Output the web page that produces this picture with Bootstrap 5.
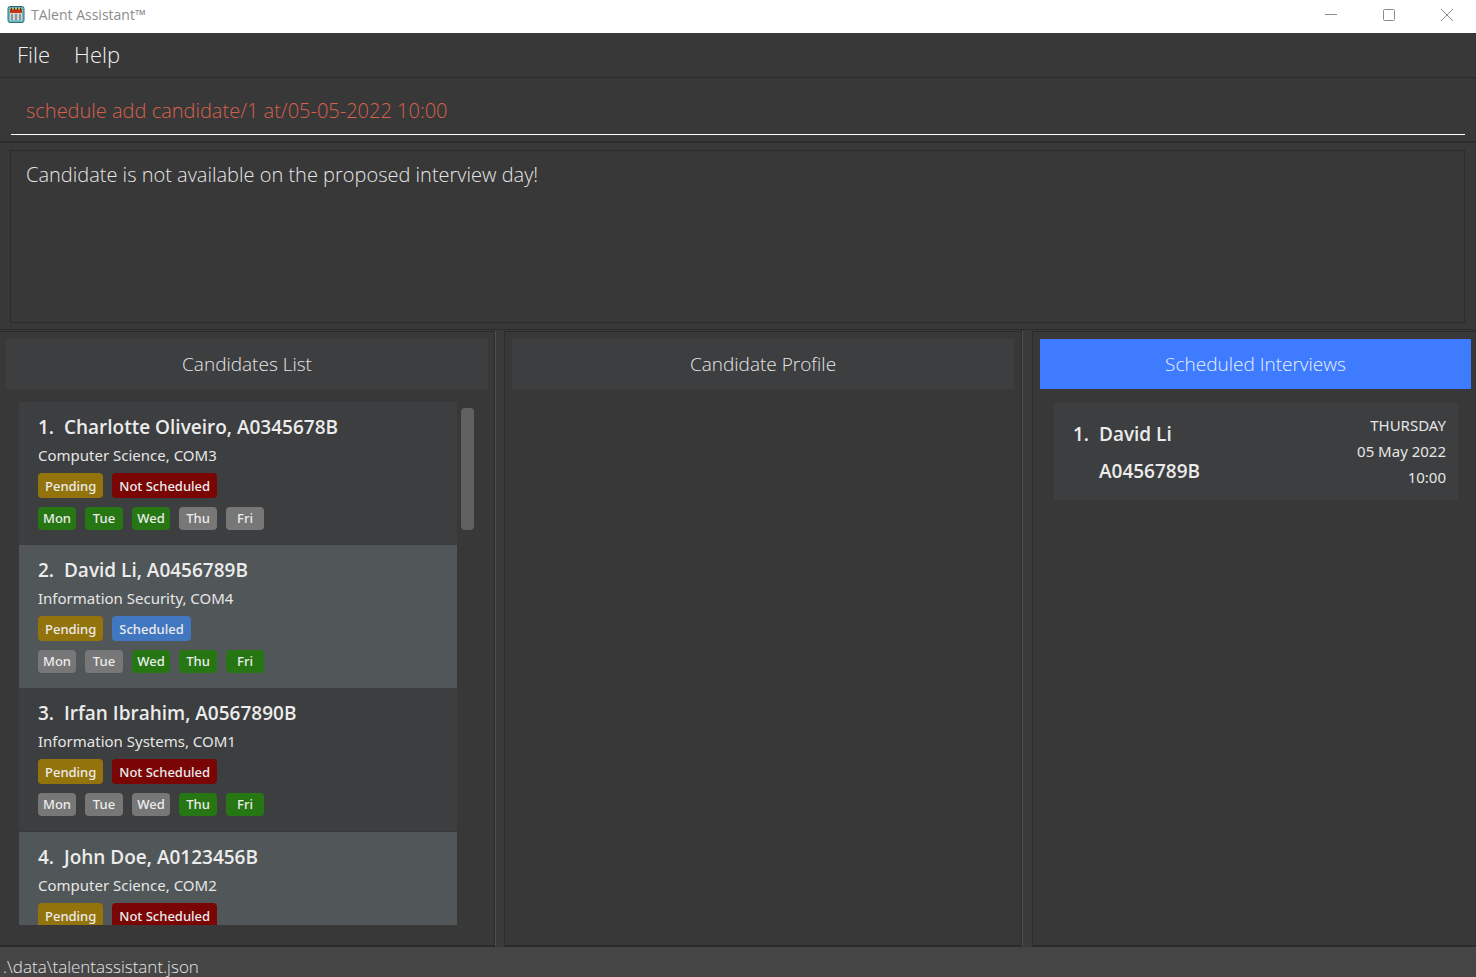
<!DOCTYPE html>
<html lang="en">
<head>
<meta charset="utf-8">
<meta name="viewport" content="width=device-width, initial-scale=1">
<title>TAlent Assistant™</title>
<link href="https://cdn.jsdelivr.net/npm/bootstrap@5.3.0/dist/css/bootstrap.min.css" rel="stylesheet">
<style>
  body { background: #383838; color: #e6e6e6; font-family: "Open Sans", "Noto Sans", sans-serif; font-size: 15px; line-height: 20px; }
  .title-bar { height: 33px; background: #fff; color: #8c8c8c; font-size: 14px; padding: 0 0 4px 7px; gap: 6px; }
  .title-bar .win-btn { width: 58px; height: 28px; line-height: 0; }
  .menu-strip { height: 45px; border-bottom: 1px solid #2b2b2b; padding: 0 5px 2px; }
  .menu-strip a { color: #f0f0f0; font-size: 22px; font-weight: 300; padding: 0 12px; }
  .command-area { padding: 8px 11px 6px; border-bottom: 2px solid #2d2d2d; }
  .command-box { height: 49px; color: #d9604c; font-size: 20px; font-weight: 300; padding: 0 15px; border-bottom: 1px solid #fff; outline: 0; }
  .result-area { padding: 7px 11px 6px 10px; border-bottom: 1px solid #2b2b2b; }
  .result-box { height: 173px; color: #e6e6e6; font-size: 20px; font-weight: 300; line-height: 28px; padding: 10px 15px; border: 1px solid #2b2b2b; resize: none; outline: 0; }
  .panes { display: grid; grid-template-columns: 495fr 9px 518fr 10px 444fr; grid-template-rows: minmax(0, 1fr); margin-top: 1px; }
  .pane { border: 1px solid #2b2b2b; border-width: 1px 1px 2px; padding: 7px 7px 20px; }
  .pane-first { border-left: 0; padding-left: 6px; padding-right: 6px; }
  .pane-last { border-right: 0; padding-right: 5px; }
  .splitter { border-left: 1px solid #505050; margin-bottom: 1px; background: #3a3a3a; }
  .pane-title { height: 50px; background: #3d3e40; color: #e6e6e6; font-size: 19px; font-weight: 300; }
  .pane-title.is-active { background: #3e7bff; color: #e8efff; }
  .list-view { margin: 13px 14px 0 13px; gap: 4px; }
  .scroll-thumb { width: 13px; height: 122px; margin-top: 6px; border-radius: 4px; background: #606060; }
  .person { height: 143px; background: #3c3e3f; padding: 12px 19px 0; font-family: "Noto Sans", sans-serif; }
  .person:nth-child(even) { background: #515658; }
  .person:nth-child(3n) { height: 144px; border-bottom: 1px solid #363839; }
  .person-name { font-family: "Open Sans", sans-serif; font-size: 19px; line-height: 26px; font-weight: 600; color: #ececec; }
  .person-course { margin-top: 5px; margin-bottom: 8px; }
  .tags { gap: 9px; }
  .tags + .tags { margin-top: 9px; }
  .tag { height: 25px; padding: 0 7px; border-radius: 4px; font-size: 13px; line-height: 26px; font-weight: 500; color: #ececec; }
  .tag-day { width: 38px; height: 23px; padding: 0; line-height: 22px; text-align: center; background: #777; }
  .is-free { background: #267714; }
  .is-pending { background: #93730b; }
  .is-unscheduled { background: #7a0505; }
  .is-scheduled { background: #4176c0; }
  .interview { margin: 14px 13px 0 14px; padding: 9px 12px 10px 19px; background: #3c3e3f; }
  .interview .person-name { line-height: 37px; padding-top: 4px; margin-bottom: -4px; }
  .interview-time { line-height: 26px; font-family: "Noto Sans", sans-serif; }
  .status-strip { height: 30px; background: #454545; font-size: 17px; font-weight: 300; line-height: 24px; padding: 8px 3px 0; }
</style>
</head>
<body class="vh-100 d-flex flex-column overflow-hidden">
<header class="title-bar d-flex align-items-center flex-shrink-0">
  <svg width="18" height="19" viewBox="0 0 18 19" aria-hidden="true">
    <rect x="1" y="1.500" width="16" height="16" rx="2" fill="#6fc0c5" stroke="#356a70"/>
    <path d="M3 8h12v7H3z" fill="#d2d8d8"/>
    <path d="M3 4h12v4H3z" fill="#c8371b"/>
    <path d="M4.500 2.500v3M7.500 2.500v3M10.500 2.500v3M13.500 2.500v3" stroke="#4b3420"/>
    <path d="M6 3v2M9 3v2M12 3v2" stroke="#e9c13a"/>
    <path d="M4 10h2m2 0h2m2 0h2M4 12h2m2 0h2m2 0h2M4 14h2m2 0h2m2 0h2" stroke="#4a4a4a"/>
  </svg>
  <span>TAlent Assistant™</span>
  <div class="d-flex ms-auto">
    <button type="button" class="win-btn btn p-0 border-0 rounded-0" aria-label="Minimize"><svg width="12" height="12" viewBox="0 0 12 12"><path d="M0 5.500h12" stroke="#8c8c8c"/></svg></button>
    <button type="button" class="win-btn btn p-0 border-0 rounded-0" aria-label="Maximize"><svg width="12" height="12" viewBox="0 0 12 12"><rect x=".5" y=".5" width="11" height="11" rx="1" fill="none" stroke="#8c8c8c"/></svg></button>
    <button type="button" class="win-btn btn p-0 border-0 rounded-0" aria-label="Close"><svg width="12" height="12" viewBox="0 0 12 12"><path d="M0 0l12 12M12 0L0 12" stroke="#8c8c8c"/></svg></button>
  </div>
</header>
<nav class="menu-strip d-flex align-items-center flex-shrink-0">
  <a href="#" class="text-decoration-none">File</a>
  <a href="#" class="text-decoration-none">Help</a>
</nav>
<div class="command-area">
  <input type="text" class="command-box d-block w-100 bg-transparent border-top-0 border-start-0 border-end-0" aria-label="Command" value="schedule add candidate/1 at/05-05-2022 10:00">
</div>
<div class="result-area">
  <textarea class="result-box d-block w-100 bg-transparent" aria-label="Result" readonly>Candidate is not available on the proposed interview day!</textarea>
</div>
<main class="panes flex-grow-1 overflow-hidden">
  <section class="pane pane-first d-flex flex-column overflow-hidden">
    <h2 class="pane-title d-flex align-items-center justify-content-center flex-shrink-0 m-0">Candidates List</h2>
    <div class="list-view d-flex flex-grow-1 overflow-hidden">
      <ul class="list-unstyled flex-grow-1 m-0 overflow-hidden">
        <li class="person">
          <div class="person-name">1.&nbsp; Charlotte Oliveiro, A0345678B</div>
          <div class="person-course">Computer Science, COM3</div>
          <div class="tags d-flex"><span class="tag is-pending">Pending</span><span class="tag is-unscheduled">Not Scheduled</span></div>
          <div class="tags d-flex"><span class="tag tag-day is-free">Mon</span><span class="tag tag-day is-free">Tue</span><span class="tag tag-day is-free">Wed</span><span class="tag tag-day">Thu</span><span class="tag tag-day">Fri</span></div>
        </li>
        <li class="person">
          <div class="person-name">2.&nbsp; David Li, A0456789B</div>
          <div class="person-course">Information Security, COM4</div>
          <div class="tags d-flex"><span class="tag is-pending">Pending</span><span class="tag is-scheduled">Scheduled</span></div>
          <div class="tags d-flex"><span class="tag tag-day">Mon</span><span class="tag tag-day">Tue</span><span class="tag tag-day is-free">Wed</span><span class="tag tag-day is-free">Thu</span><span class="tag tag-day is-free">Fri</span></div>
        </li>
        <li class="person">
          <div class="person-name">3.&nbsp; Irfan Ibrahim, A0567890B</div>
          <div class="person-course">Information Systems, COM1</div>
          <div class="tags d-flex"><span class="tag is-pending">Pending</span><span class="tag is-unscheduled">Not Scheduled</span></div>
          <div class="tags d-flex"><span class="tag tag-day">Mon</span><span class="tag tag-day">Tue</span><span class="tag tag-day">Wed</span><span class="tag tag-day is-free">Thu</span><span class="tag tag-day is-free">Fri</span></div>
        </li>
        <li class="person">
          <div class="person-name">4.&nbsp; John Doe, A0123456B</div>
          <div class="person-course">Computer Science, COM2</div>
          <div class="tags d-flex"><span class="tag is-pending">Pending</span><span class="tag is-unscheduled">Not Scheduled</span></div>
        </li>
      </ul>
      <div class="scroll-thumb flex-shrink-0"></div>
    </div>
  </section>
  <div class="splitter"></div>
  <section class="pane">
    <h2 class="pane-title d-flex align-items-center justify-content-center m-0">Candidate Profile</h2>
  </section>
  <div class="splitter"></div>
  <section class="pane pane-last">
    <h2 class="pane-title is-active d-flex align-items-center justify-content-center m-0">Scheduled Interviews</h2>
    <div class="interview d-flex justify-content-between">
      <div class="person-name d-flex"><span>1.&nbsp;&nbsp;</span><span>David Li<br>A0456789B</span></div>
      <div class="interview-time text-end">THURSDAY<br>05 May 2022<br>10:00</div>
    </div>
  </section>
</main>
<footer class="status-strip flex-shrink-0 text-nowrap">.\data\talentassistant.json</footer>
<script src="https://cdn.jsdelivr.net/npm/bootstrap@5.3.0/dist/js/bootstrap.bundle.min.js"></script>
</body>
</html>
